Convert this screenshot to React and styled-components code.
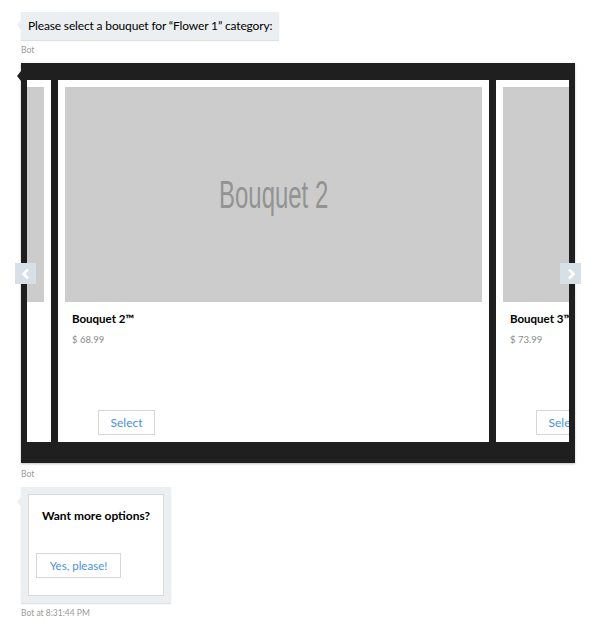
import React from 'react';
import styled, { createGlobalStyle } from 'styled-components';

const GlobalStyle = createGlobalStyle`
  body {
    margin: 0;
    background: #fff;
    font-family: Lato, 'Open Sans', sans-serif;
    color: #000;
  }
`;

const Transcript = styled.div`
  padding: 12px 0 0 21px;
  display: flex;
  flex-direction: column;
  align-items: flex-start;
`;

const Bubble = styled.div`
  position: relative;
  background: #eceff1;
  box-shadow: 0 1px 1px rgba(0, 0, 0, 0.12);
  padding: ${p => p.$pad || '5px 7px'};
  margin-top: ${p => p.$top || 0}px;
  font-size: 12px;
  line-height: 18px;
  letter-spacing: ${p => p.$tight ? '-0.15px' : 'normal'};

  &::before {
    content: '';
    position: absolute;
    left: -4px;
    top: ${p => p.$tail || 8}px;
    border-top: 5px solid transparent;
    border-bottom: 5px solid transparent;
    border-right: 4px solid ${p => p.$tailColor || '#eceff1'};
  }
`;

const Meta = styled.div`
  font-size: 8.5px;
  line-height: 16px;
  color: #9a9a9a;
  margin-top: ${p => p.$top || 2}px;
`;

const Frame = styled(Bubble)`
  width: 554px;
  height: 400px;
  box-sizing: border-box;
  background: #1f1f1f;
  padding: 17px 6px 21px;
  box-shadow: 0 1px 2px rgba(0, 0, 0, 0.25);
`;

const Viewport = styled.div`
  width: 100%;
  height: 100%;
  overflow: hidden;
`;

const Strip = styled.div`
  display: flex;
  gap: 7px;
  height: 100%;
  transform: translateX(${p => p.$offset}px);
`;

const Card = styled.div`
  flex: 0 0 431px;
  height: 100%;
  background: #fff;
  display: flex;
  flex-direction: column;
  padding: 7px;
  box-sizing: border-box;
`;

const Picture = styled.div`
  height: 215px;
  flex: none;
  background: #cccccc;
  display: flex;
  align-items: center;
  justify-content: center;
  overflow: hidden;
`;

const PictureLabel = styled.span`
  color: #939393;
  font-family: 'Liberation Sans', Arial, sans-serif;
  font-size: 38px;
  line-height: 1;
  display: inline-block;
  transform: scaleX(0.63);
  white-space: nowrap;
`;

const Title = styled.div`
  font-weight: 700;
  font-size: 11.5px;
  line-height: 16px;
  margin: 9px 7px 0;
  white-space: nowrap;
`;

const Price = styled.div`
  font-size: 9.5px;
  line-height: 14px;
  color: #8a8a8a;
  margin: 6px 7px 0;
`;

const Action = styled.button`
  font-family: inherit;
  font-size: ${p => p.$size || 12}px;
  color: #4a90e2;
  background: #fff;
  border: 1px solid #d6d6d6;
  height: 25px;
  width: ${p => p.$w}px;
  padding: 0;
  margin: ${p => p.$margin};
  cursor: pointer;
  flex: none;
  white-space: nowrap;
`;

const Nav = styled.button`
  position: absolute;
  top: 200px;
  ${p => (p.$side === 'left' ? 'left: -6px;' : 'right: -6px;')}
  width: 21px;
  height: 21px;
  padding: 0;
  border: none;
  background: #d7e0e7;
  display: flex;
  align-items: center;
  justify-content: center;
`;

const HeroCard = styled.div`
  background: #fff;
  border: 1px solid #d9d9d9;
  width: 136px;
  height: 102px;
  box-sizing: border-box;
  display: flex;
  flex-direction: column;
  align-items: flex-start;
  padding-top: 12px;
`;

const HeroTitle = styled.div`
  align-self: stretch;
  text-align: center;
  font-weight: 700;
  font-size: 12px;
  line-height: 18px;
`;

const Chevron = ({ dir }) => (
  <svg width="12" height="12" viewBox="0 0 12 12">
    <path
      d={dir === 'left' ? 'M8 1.5 L3.5 6 L8 10.5' : 'M4 1.5 L8.5 6 L4 10.5'}
      fill="none"
      stroke="#fff"
      strokeWidth="2.6"
    />
  </svg>
);

const bouquets = [
  { name: 'Bouquet 1', price: '$ 59.99' },
  { name: 'Bouquet 2', price: '$ 68.99' },
  { name: 'Bouquet 3', price: '$ 73.99' },
];

export default function App() {
  return (
    <>
      <GlobalStyle />
      <Transcript>
        <Bubble $tight>Please select a bouquet for “Flower 1” category:</Bubble>
        <Meta>Bot</Meta>
        <Frame $tailColor="#1f1f1f" $tail={8} $top={5}>
          <Viewport>
            <Strip $offset={-407}>
              {bouquets.map(b => (
                <Card key={b.name}>
                  <Picture>
                    <PictureLabel>{b.name}</PictureLabel>
                  </Picture>
                  <Title>{b.name}™</Title>
                  <Price>{b.price}</Price>
                  <Action $w={57} $margin="auto 0 0 33px">Select</Action>
                </Card>
              ))}
            </Strip>
          </Viewport>
          <Nav $side="left"><Chevron dir="left" /></Nav>
          <Nav $side="right"><Chevron dir="right" /></Nav>
        </Frame>
        <Meta $top={3}>Bot</Meta>
        <Bubble $pad="7px" $tail={10} $top={5}>
          <HeroCard>
            <HeroTitle>Want more options?</HeroTitle>
            <Action $w={85} $size={11.5} $margin="28px 0 0 7px">Yes, please!</Action>
          </HeroCard>
        </Bubble>
        <Meta>Bot at 8:31:44 PM</Meta>
      </Transcript>
    </>
  );
}
